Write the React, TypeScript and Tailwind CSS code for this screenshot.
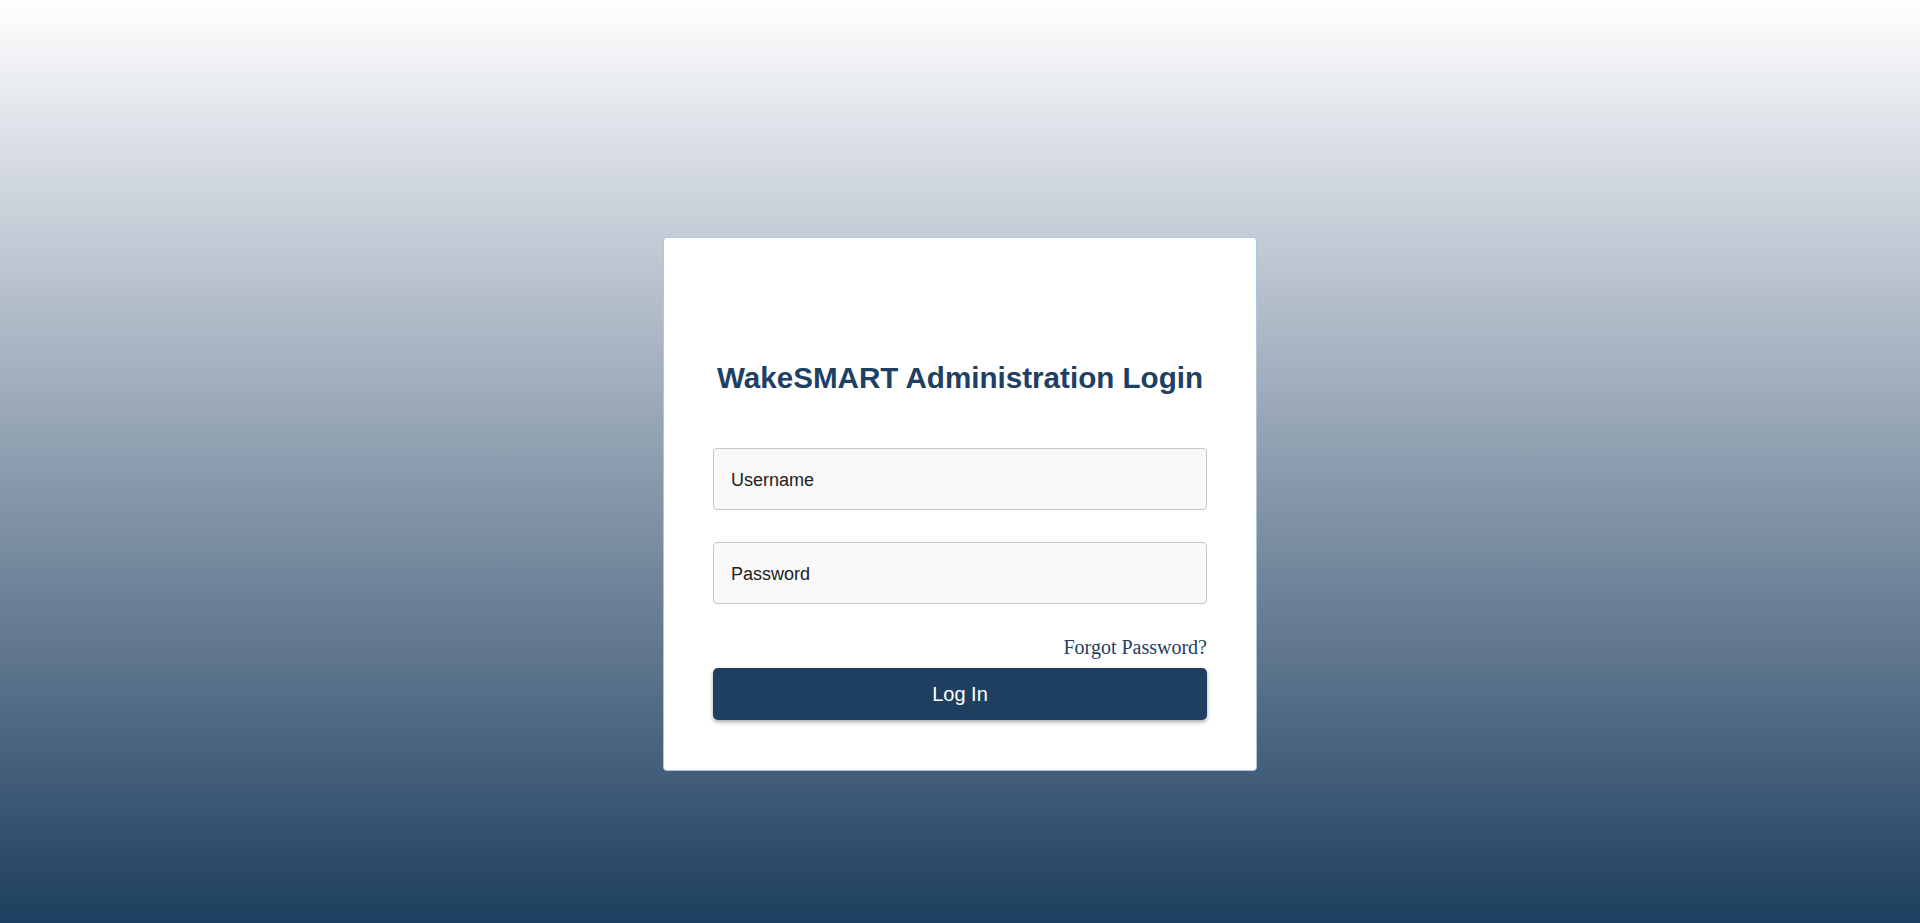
import React from "react";

export default function App() {
  return (
    <div className="min-h-[923px] w-full flex justify-center bg-[linear-gradient(to_bottom,#ffffff_0%,#d0d6df_20%,#1e3f5f_100%)] font-['Liberation_Sans',Arial,sans-serif]">
      <div className="mt-[237px] mb-[152px] w-[594px] h-[534px] bg-white border border-[#a9c7e4] rounded-[4px] px-[49px] flex flex-col">
        <h1 className="pt-[123px] text-center text-[29.6px] leading-[34px] font-bold text-[#1e4064]">
          WakeSMART Administration Login
        </h1>
        <input
          type="text"
          placeholder="Username"
          className="mt-[53px] h-[62px] w-full rounded-[4px] border border-[#c6c6c6] bg-[#f9f9f9] pl-[17px] pt-[2px] text-[18px] text-[#222] placeholder:text-[#222] outline-none"
        />
        <input
          type="password"
          placeholder="Password"
          className="mt-[32px] h-[62px] w-full rounded-[4px] border border-[#c6c6c6] bg-[#f9f9f9] pl-[17px] pt-[2px] text-[18px] text-[#222] placeholder:text-[#222] outline-none"
        />
        <div className="mt-[32px] flex justify-end">
          <a
            href="#"
            className="text-[20px] leading-[23px] text-[#1e4064] font-['Liberation_Serif','Times_New_Roman',serif]"
          >
            Forgot Password?
          </a>
        </div>
        <button className="mt-[9px] h-[52px] w-full rounded-[5px] bg-[#1f3f60] text-white text-[20px] shadow-[0_2px_4px_rgba(0,0,0,0.35)]">
          Log In
        </button>
      </div>
    </div>
  );
}
